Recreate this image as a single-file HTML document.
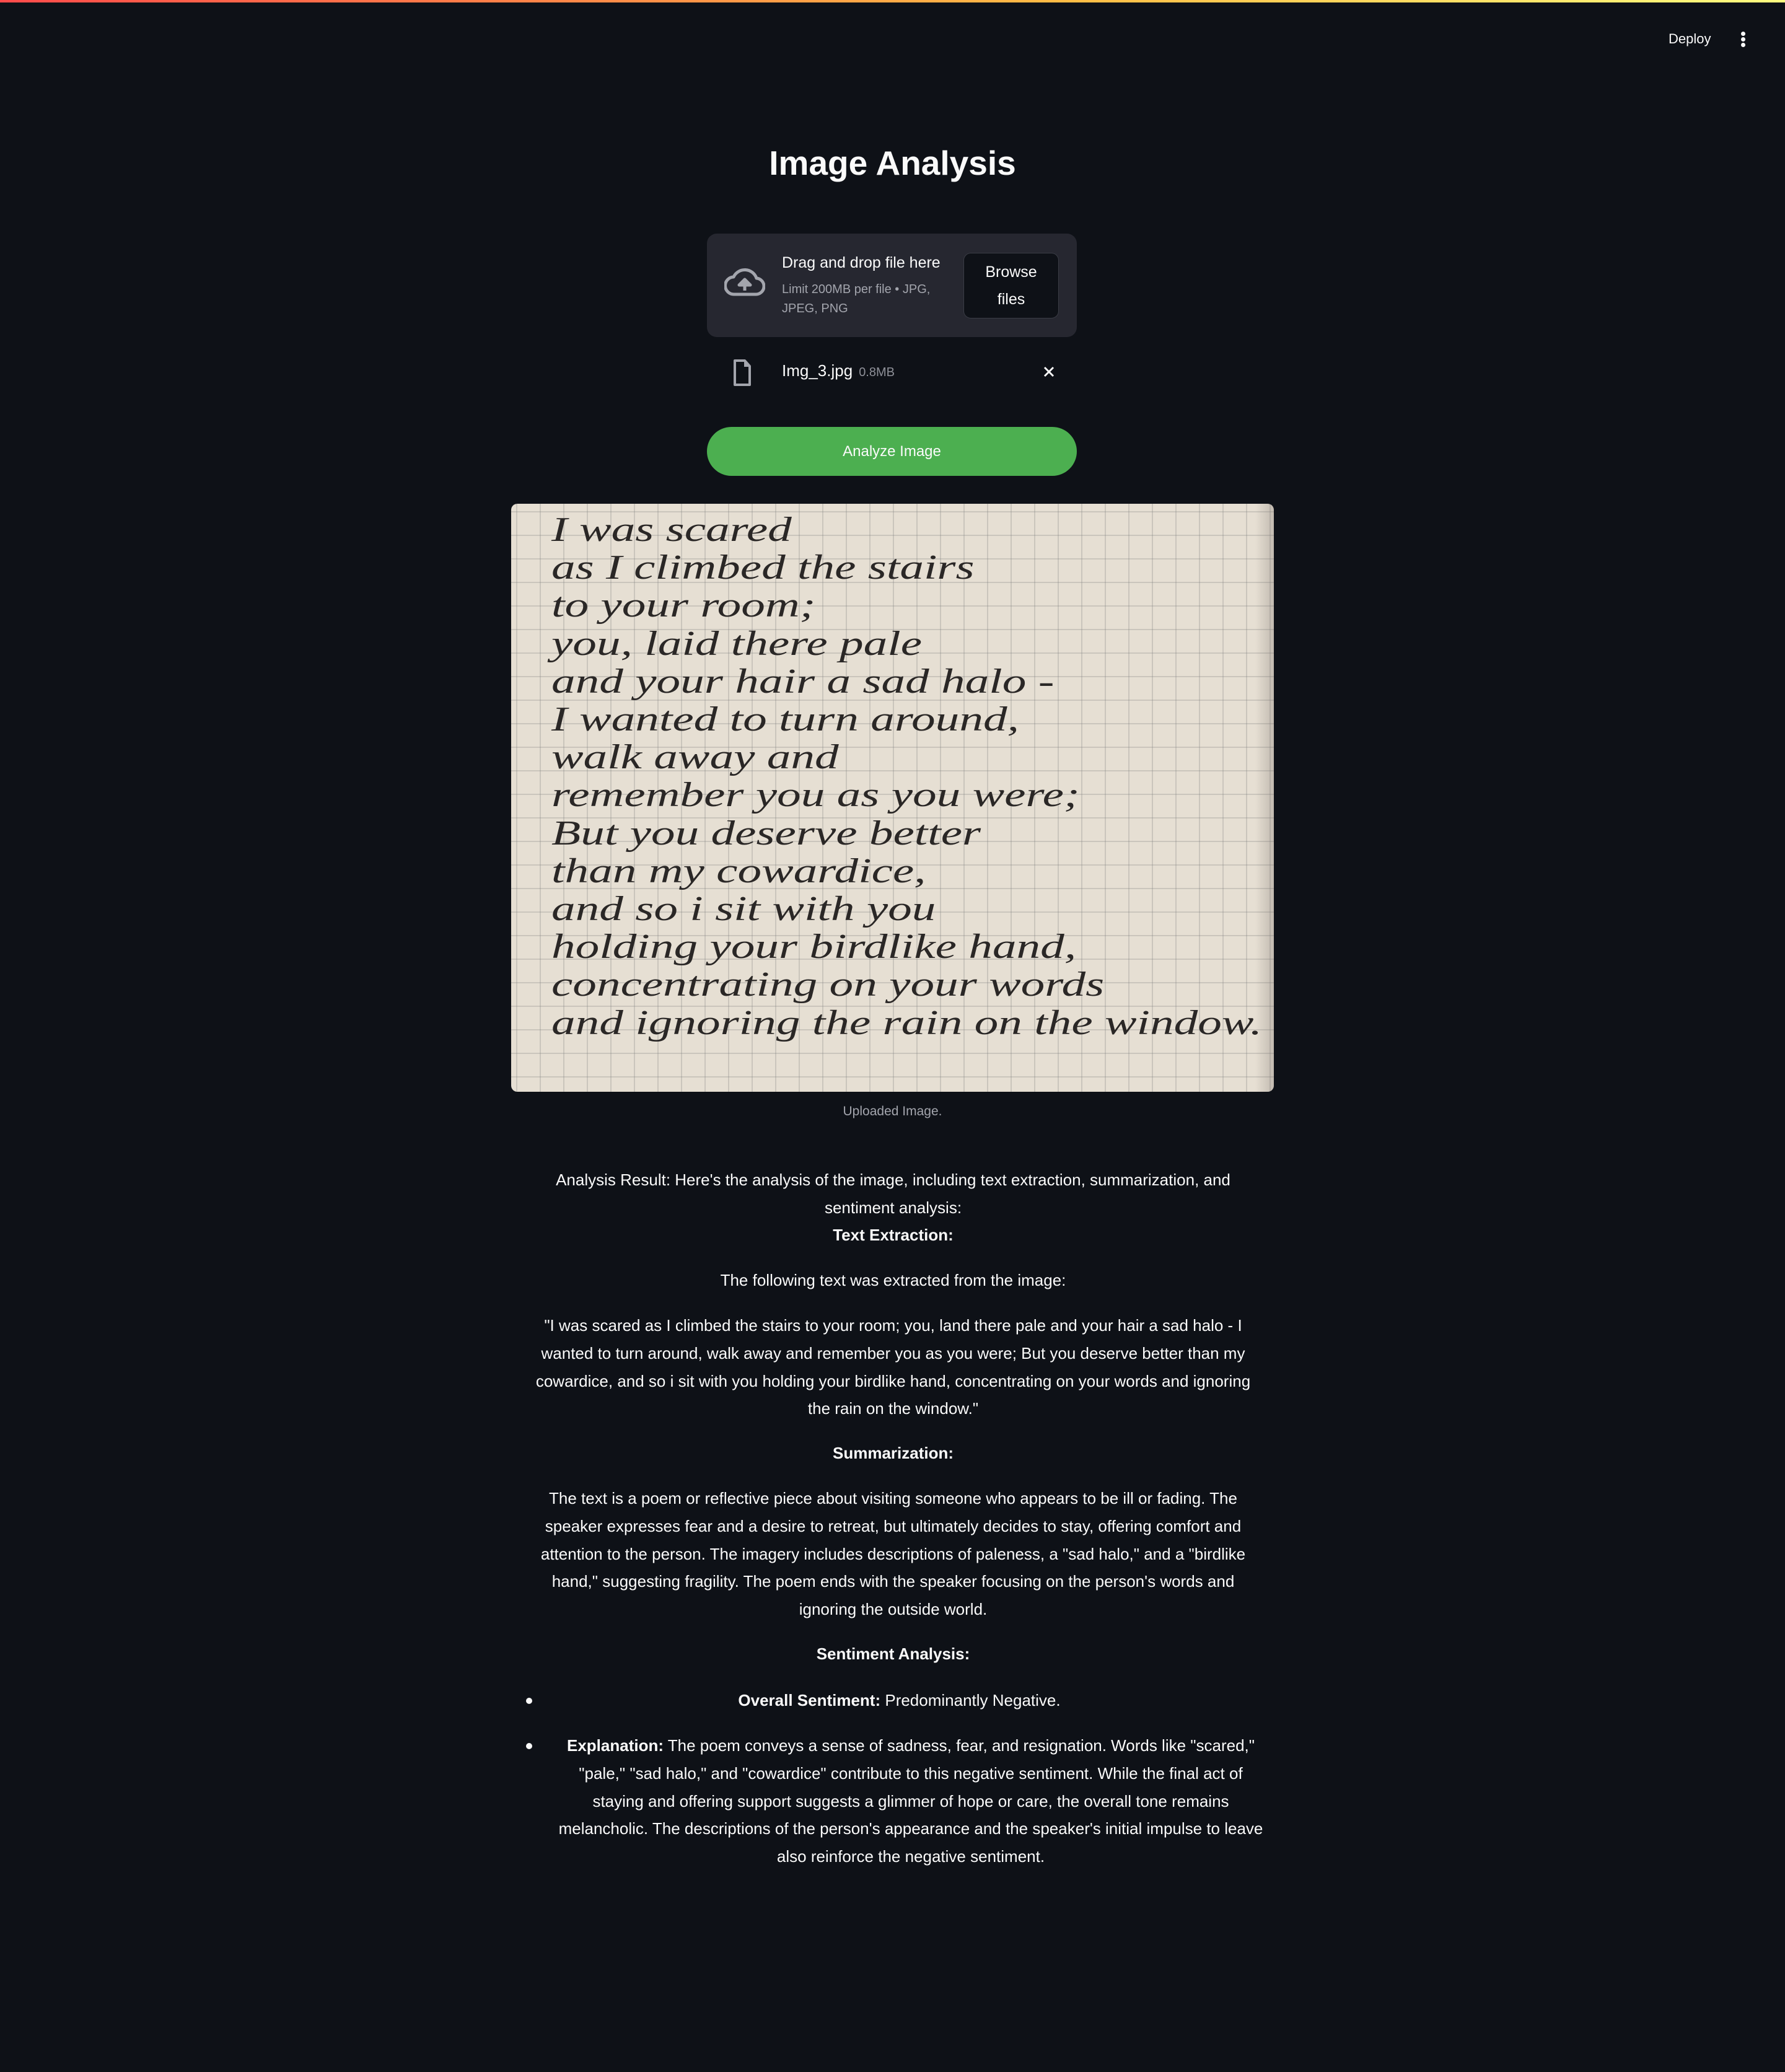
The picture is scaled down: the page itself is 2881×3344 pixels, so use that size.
<!DOCTYPE html>
<html><head><meta charset="utf-8"><style>
*{margin:0;padding:0;box-sizing:border-box}
html,body{width:2881px;height:3344px;background:#0e1117;overflow:hidden;font-family:"Liberation Sans",sans-serif;color:#fafafa}
.bar{position:absolute;left:0;top:0;width:2881px;height:4px;background:linear-gradient(90deg,#ff4b4b,#ffbd45 60%,#fffd80)}
.deploy{position:absolute;left:2693px;top:50px;font-size:22px;color:#fafafa}
.dot{position:absolute;left:2810px;width:7px;height:7px;border-radius:50%;background:#fafafa}
h1{position:absolute;left:0;width:2881px;top:231px;text-align:center;font-size:55px;font-weight:bold}
.up{position:absolute;left:1141px;top:377px;width:597px;height:167px;background:#262730;border-radius:16px}
.up .t1{position:absolute;left:121px;top:33px;font-size:25px;color:#fafafa}
.up .t2{position:absolute;left:121px;top:75px;font-size:20px;line-height:31px;color:#a3a5ad;width:270px}
.br{position:absolute;left:414px;top:31px;width:154px;height:106px;background:#0e1117;border:1px solid #3a3c45;border-radius:12px;text-align:center;font-size:25px;line-height:44px;padding-top:8px}
.file{position:absolute;left:1262px;top:583px;font-size:26px}
.file span{font-size:20px;color:#8e9098;margin-left:10px}
.btn{position:absolute;left:1141px;top:689px;width:597px;height:79px;background:#4caf50;border-radius:40px;text-align:center;line-height:79px;font-size:24px}
.img{position:absolute;left:825px;top:813px;width:1231px;height:949px;border-radius:10px;overflow:hidden;
background-color:#e6dfd3;
background-image:linear-gradient(90deg,rgba(120,120,120,.25) 2px,transparent 2px),linear-gradient(rgba(120,120,120,.25) 2px,transparent 2px);
background-size:38px 38px;background-position:8px 12px}
.img .sh{position:absolute;right:0;top:0;width:30px;height:100%;background:linear-gradient(90deg,transparent,rgba(110,100,95,.3))}
.hw{position:absolute;left:65px;top:12px;font-family:"Liberation Serif",serif;font-style:italic;font-size:56px;line-height:61.2px;color:#2a2726;white-space:pre;transform:scaleX(1.38);transform-origin:0 0}
.cap{position:absolute;left:0;width:2881px;top:1782px;text-align:center;font-size:21px;color:#a3a5ad}
.p{position:absolute;left:853px;width:1177px;text-align:center;font-size:26px;line-height:44.8px}
b{font-weight:bold}
.li{position:absolute;left:863px;width:1177px;text-align:center;font-size:26px;line-height:44.8px}
.bul{position:absolute;left:849px;width:10px;height:10px;border-radius:50%;background:#fafafa}
</style></head><body>
<div class="bar"></div>
<div class="deploy">Deploy</div>
<div class="dot" style="top:51px"></div><div class="dot" style="top:60px"></div><div class="dot" style="top:69px"></div>
<h1>Image Analysis</h1>
<div class="up">
<svg style="position:absolute;left:28px;top:56px" width="66" height="46" viewBox="0 0 66 46"><path d="M16 42 H50 A13 13 0 0 0 52 16 A20 20 0 0 0 15 14 A14 14 0 0 0 16 42 Z" fill="none" stroke="#a3a5ad" stroke-width="5" stroke-linejoin="round"/><path d="M33 36 V20 M24 27 L33 18 L42 27 Z" fill="#a3a5ad" stroke="#a3a5ad" stroke-width="5" stroke-linejoin="round"/></svg>
<div class="t1">Drag and drop file here</div>
<div class="t2">Limit 200MB per file • JPG, JPEG, PNG</div>
<div class="br">Browse<br>files</div>
</div>
<svg style="position:absolute;left:1183px;top:579px" width="30" height="45" viewBox="0 0 30 45"><path d="M3 3 H19 L27 12 V42 H3 Z" fill="none" stroke="#a3a5ad" stroke-width="4" stroke-linejoin="round"/><path d="M18 3 V13 H27" fill="#a3a5ad"/></svg>
<div class="file">Img_3.jpg<span>0.8MB</span></div>
<svg style="position:absolute;left:1684px;top:591px" width="18" height="18" viewBox="0 0 18 18"><path d="M2 2 L16 16 M16 2 L2 16" stroke="#fafafa" stroke-width="3"/></svg>
<div class="btn">Analyze Image</div>
<div class="img"><div class="sh"></div><div class="hw">I was scared
as I climbed the stairs
to your room;
you, laid there pale
and your hair a sad halo -
I wanted to turn around,
walk away and
remember you as you were;
But you deserve better
than my cowardice,
and so i sit with you
holding your birdlike hand,
concentrating on your words
and ignoring the rain on the window.</div></div>
<div class="cap">Uploaded Image.</div>
<div class="p" style="top:1882px">Analysis Result: Here's the analysis of the image, including text extraction, summarization, and sentiment analysis:</div>
<div class="p" style="top:1971px"><b>Text Extraction:</b></div>
<div class="p" style="top:2044px">The following text was extracted from the image:</div>
<div class="p" style="top:2117px">"I was scared as I climbed the stairs to your room; you, land there pale and your hair a sad halo - I wanted to turn around, walk away and remember you as you were; But you deserve better than my cowardice, and so i sit with you holding your birdlike hand, concentrating on your words and ignoring the rain on the window."</div>
<div class="p" style="top:2323px"><b>Summarization:</b></div>
<div class="p" style="top:2396px">The text is a poem or reflective piece about visiting someone who appears to be ill or fading. The speaker expresses fear and a desire to retreat, but ultimately decides to stay, offering comfort and attention to the person. The imagery includes descriptions of paleness, a "sad halo," and a "birdlike hand," suggesting fragility. The poem ends with the speaker focusing on the person's words and ignoring the outside world.</div>
<div class="p" style="top:2647px"><b>Sentiment Analysis:</b></div>
<div class="bul" style="top:2740px"></div>
<div class="li" style="top:2722px"><b>Overall Sentiment:</b> Predominantly Negative.</div>
<div class="bul" style="top:2813px"></div>
<div class="li" style="top:2795px;left:900px;width:1140px"><b>Explanation:</b> The poem conveys a sense of sadness, fear, and resignation. Words like "scared," "pale," "sad halo," and "cowardice" contribute to this negative sentiment. While the final act of staying and offering support suggests a glimmer of hope or care, the overall tone remains melancholic. The descriptions of the person's appearance and the speaker's initial impulse to leave also reinforce the negative sentiment.</div>
</body></html>
